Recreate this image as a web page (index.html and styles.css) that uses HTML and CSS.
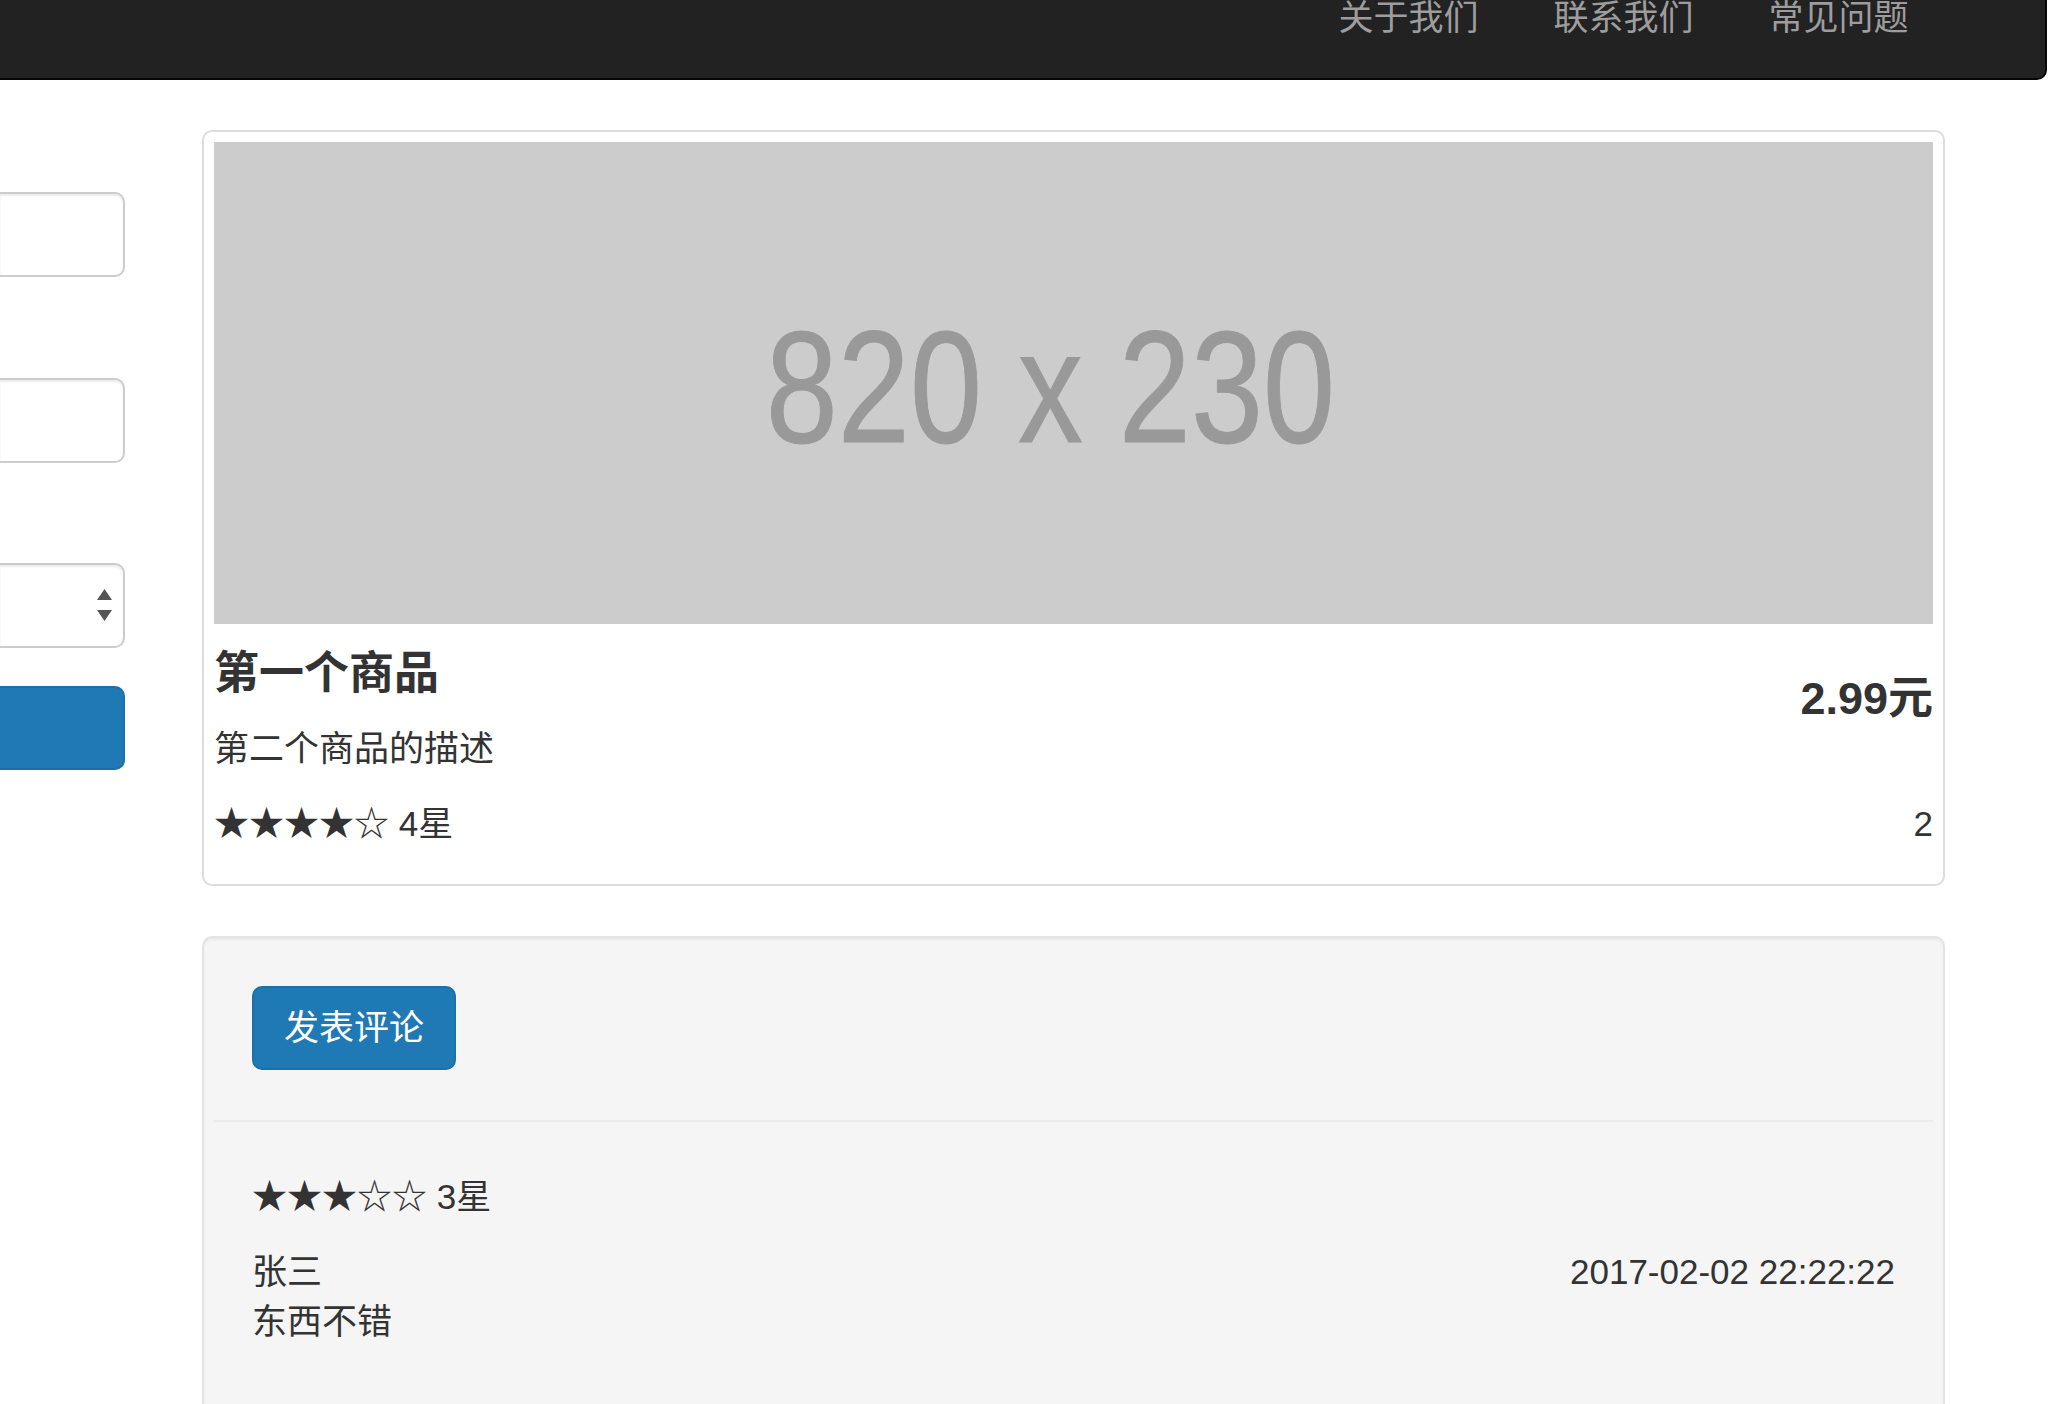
FILE: index.html
```html
<!DOCTYPE html>
<html lang="zh-CN">
<head>
<meta charset="utf-8">
<title>商品详情</title>
<link rel="stylesheet" href="styles.css">
</head>
<body>
<header class="navbar">
  <ul class="nav">
    <li><a class="nav-link">关于我们</a></li>
    <li><a class="nav-link">联系我们</a></li>
    <li><a class="nav-link">常见问题</a></li>
  </ul>
</header>
<main class="page">
  <aside class="sidebar">
    <div class="field field-first"></div>
    <div class="field field-next"></div>
    <div class="field field-next field-select">
      <svg class="select-arrows" width="15" height="33" viewBox="0 0 15 33"><path d="M0 11 L7.5 0 L15 11 Z M0 21 L15 21 L7.5 32 Z" fill="#555"/></svg>
    </div>
    <div class="side-btn"></div>
  </aside>
  <section class="content">
    <div class="thumbnail">
      <div class="placeholder"><span class="placeholder-text">820 x 230</span></div>
      <div class="caption">
        <h4 class="price">2.99元</h4>
        <h4 class="title">第一个商品</h4>
        <p class="desc">第二个商品的描述</p>
      </div>
      <div class="ratings">
        <p class="rating-text">★★★★☆ 4星</p>
        <p class="rating-count">2</p>
      </div>
    </div>
    <div class="well">
      <div class="well-actions"><button class="btn">发表评论</button></div>
      <hr class="divider">
      <p class="review-stars">★★★☆☆ 3星</p>
      <div class="review-head"><span>张三</span><span>2017-02-02 22:22:22</span></div>
      <p class="review-body">东西不错</p>
    </div>
  </section>
</main>
</body>
</html>
```
FILE: styles.css
```css
* { box-sizing: border-box; }
html, body { margin: 0; padding: 0; }
body {
  width: 2048px;
  height: 1404px;
  overflow: hidden;
  background: #fff;
  color: #333;
  font-family: "Liberation Sans", "Noto Sans CJK SC", sans-serif;
  font-size: 35px;
  line-height: 50px;
}
p { margin: 0; }

.navbar {
  height: 80px;
  margin-right: 1px;
  background: #222;
  border-bottom: 2px solid #080808;
  border-right: 2px solid #080808;
  border-bottom-right-radius: 10px;
  overflow: hidden;
  display: flex;
  justify-content: flex-end;
  align-items: flex-end;
  padding-right: 99px;
  padding-bottom: 35px;
}
.nav {
  list-style: none;
  margin: 0;
  padding: 0;
  display: flex;
}
.nav-link {
  display: block;
  padding: 0 37.5px;
  color: #9d9d9d;
  line-height: 50px;
}

.page {
  display: flex;
  align-items: flex-start;
  gap: 77px;
  margin-top: 50px;
}

.sidebar {
  width: 125px;
  flex: none;
}
.field {
  height: 85px;
  background: #fff;
  border: 2px solid #ccc;
  border-left: none;
  border-radius: 0 10px 10px 0;
  box-shadow: inset 0 2px 2px rgba(0,0,0,.075);
}
.field-first { margin-top: 62px; }
.field-next { margin-top: 101px; }
.field-select {
  margin-top: 100px;
  display: flex;
  align-items: center;
  justify-content: flex-end;
  padding-right: 11px;
}
.select-arrows { display: block; }
.side-btn {
  margin-top: 38px;
  height: 84px;
  background: #1f79b5;
  border: 2px solid #1c6fa7;
  border-left: none;
  border-radius: 0 10px 10px 0;
}

.content {
  width: 1743px;
  flex: none;
}
.thumbnail {
  border: 2px solid #ddd;
  border-radius: 10px;
  padding: 10px;
  margin-bottom: 50px;
  background: #fff;
}
.placeholder {
  height: 482px;
  background: #ccc;
  display: flex;
  align-items: center;
  justify-content: center;
  padding-right: 46px;
}
.placeholder-text {
  display: inline-block;
  color: #999;
  font-size: 160px;
  line-height: 160px;
  transform: scaleX(0.81);
  margin-top: 8px;
  -webkit-text-stroke: 1px #999;
}
.caption { display: flow-root; }
.title, .price {
  font-size: 45px;
  line-height: 49.5px;
  font-weight: 700;
  margin: 25px 0;
}
.price {
  float: right;
  margin-top: 50px;
}
.desc { margin-bottom: 25px; }
.ratings {
  display: flex;
  justify-content: space-between;
  margin-bottom: 25px;
}

.well {
  background: #f5f5f5;
  border: 2px solid #e3e3e3;
  border-radius: 10px;
  padding: 48px;
  box-shadow: inset 0 2px 2px rgba(0,0,0,.05);
}
.well-actions { display: flex; }
.btn {
  font: inherit;
  font-size: 35px;
  line-height: 50px;
  color: #fff;
  background: #1f79b5;
  border: 2px solid #1c6fa7;
  border-radius: 10px;
  padding: 15px 30px;
  margin: 0;
}
.divider {
  margin: 50px -38px 50px;
  border: 0;
  border-top: 2px solid #ebebeb;
  height: 0;
}
.review-stars { margin-bottom: 25px; }
.review-head {
  display: flex;
  justify-content: space-between;
}
.review-body { margin-bottom: 25px; }
```
